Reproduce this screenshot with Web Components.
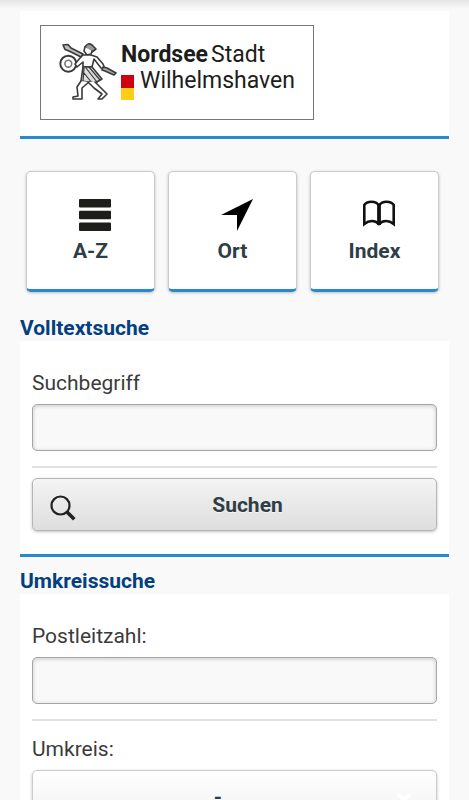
<!DOCTYPE html>
<html lang="de">
<head>
<meta charset="utf-8">
<meta name="viewport" content="width=device-width, initial-scale=1">
<title>Wilhelmshaven</title>
<style>
  body {
    --page: #f9f9f9;
    --blue: #258ad2;
    --heading: #04407f;
    --ink: #2f3e46;
    margin: 0;
    background: linear-gradient(#e6e6e6, #f9f9f9 9px) no-repeat var(--page);
    color: #3b3b3b;
    font-family: Roboto, "Liberation Sans", sans-serif;
    font-size: 21px;
    line-height: 26px;
  }
</style>
</head>
<body>

<mobile-page>
  <city-header></city-header>
  <tile-nav>
    <nav-tile label="A-Z" href="#a-z">
      <svg viewBox="0 0 32 32" width="32" height="32" fill="#1d1d1b">
        <rect y="0" width="32" height="8.6" rx="1"/>
        <rect y="11.7" width="32" height="8.6" rx="1"/>
        <rect y="23.4" width="32" height="8.6" rx="1"/>
      </svg>
    </nav-tile>
    <nav-tile label="Ort" href="#ort">
      <svg viewBox="0 0 32 32" width="32" height="32"><path d="M32 0 L16 32 V16 H0 Z"/></svg>
    </nav-tile>
    <nav-tile label="Index" href="#index">
      <svg viewBox="0 0 32 32" width="32" height="32" fill="none" stroke="#111" stroke-width="2.6">
        <path d="M16 6.5 C14 3.5 11 2.8 8.5 2.8 C5 2.8 2.5 4 1.3 6 V25 C6 21 12 21 16 25 C20 21 26 21 30.7 25 V6 C29.5 4 27 2.8 23.5 2.8 C21 2.8 18 3.5 16 6.5 Z"/>
        <path d="M16 5 V26" stroke-width="3.8"/>
      </svg>
    </nav-tile>
  </tile-nav>

  <form-panel heading="Volltextsuche">
    <text-field label="Suchbegriff" name="suchbegriff"></text-field>
    <search-button>Suchen</search-button>
  </form-panel>

  <form-panel heading="Umkreissuche">
    <text-field label="Postleitzahl:" name="plz"></text-field>
    <select-field label="Umkreis:" name="umkreis"></select-field>
  </form-panel>
</mobile-page>

<script>
// Every element attaches an open shadow root and renders once
class BaseElement extends HTMLElement {
  constructor() {
    super();
    this.attachShadow({ mode: "open" });
  }

  connectedCallback() {
    this.shadowRoot.innerHTML = this.render();
  }
}

class MobilePage extends BaseElement {
  render() {
    return `
      <style>
        :host { display: block; padding: 11px 20px 20px; }
      </style>
      <slot></slot>
    `;
  }
}

class CityHeader extends BaseElement {
  render() {
    return `
      <style>
        :host {
          display: flex;
          padding: 14px 20px 16px;
          background: #fff;
          border-bottom: 3px solid var(--blue);
        }
        .logo {
          display: flex;
          align-items: flex-start;
          box-sizing: border-box;
          width: 274px;
          height: 95px;
          padding: 16px 0 0 18px;
          border: 1px solid #777;
          color: #1d1d1b;
          font-size: 23px;
          line-height: 26px;
          text-decoration: none;
          white-space: nowrap;
        }
        .figure { flex: none; }
        .name { margin-left: 4px; }
        .row { display: flex; gap: 3px; }
        .flag {
          width: 13px;
          height: 25px;
          margin: 7px 3px 0 0;
          background: linear-gradient(#d0000f 50%, #fbcf16 50%);
        }
      </style>
      <a class="logo" href="#start">
        <svg class="figure" viewBox="0 0 58 60" width="58" height="60" fill="none" stroke="#3a3a3a" stroke-width="1.6" stroke-linejoin="round" stroke-linecap="round">
          <path d="M4 3 L9 2.5 L12 6 L24 12 L22 15 L10 9 L6 7.5 Z" fill="#bbb"/>
          <circle cx="9.3" cy="21.7" r="8" fill="#fff" stroke-width="2"/>
          <circle cx="9.3" cy="21.7" r="3.4" stroke="#777"/>
          <path d="M26 5 Q29 0 33 3 L37 7 L33 10 L29 8 Z" fill="#999"/>
          <path d="M26 5 L25 9 L28 13 L32 12 L33 9" fill="#fff"/>
          <path d="M24 13 L21 16 L16 22 L18 25 L24 20 V25 H33 L35 17 L42 26 L46 27 L44 22 L38 15 L32 13 Z" fill="#fff"/>
          <path d="M44 25 L48 26 L57 31 L55 33 L46 29 L43 28 Z" fill="#aaa"/>
          <path d="M24 25 H33 L43 37 L36 41 L22 39 Z" fill="#ddd"/>
          <path d="M25 26 L24 39 M27 26 L38 40 M30 25 L41 38 M25 31 L33 41" stroke-width="1.2"/>
          <path d="M22 39 L18 45 L19 54 L14 55 L14 57 H23 V46 L30 40" fill="#fff"/>
          <path d="M29 40 L35 46 L43 52 L39 57 H43 L48 52 L40 44 L36 40" fill="#fff"/>
        </svg>
        <span class="name">
          <span class="row"><b>Nordsee</b><span>Stadt</span></span>
          <span class="row"><span class="flag"></span><span>Wilhelmshaven</span></span>
        </span>
      </a>
    `;
  }
}

class TileNav extends BaseElement {
  render() {
    return `
      <style>
        :host { display: block; }
        nav {
          display: grid;
          grid-template-columns: repeat(3, 1fr);
          gap: 13px;
          padding: 32px 10px 24px 6px;
        }
      </style>
      <nav><slot></slot></nav>
    `;
  }
}

class NavTile extends BaseElement {
  render() {
    return `
      <style>
        :host { display: block; }
        a {
          display: flex;
          flex-direction: column;
          align-items: center;
          gap: 7px;
          padding: 27px 0 25px;
          border: 1px solid #ccc;
          border-bottom: 3px solid var(--blue);
          border-radius: 5px;
          background: #fff;
          box-shadow: 0 1px 3px rgba(0, 0, 0, 0.25);
          color: var(--ink);
          font-weight: 700;
          text-decoration: none;
        }
        ::slotted(svg) { display: block; margin-left: 8px; }
      </style>
      <a href="${this.getAttribute("href")}"><slot></slot>${this.getAttribute("label")}</a>
    `;
  }
}

class FormPanel extends BaseElement {
  render() {
    return `
      <style>
        :host { display: block; }
        h2 {
          margin: 0;
          color: var(--heading);
          font-size: inherit;
          font-weight: 700;
          line-height: 25px;
        }
        form {
          padding: 29px 12px 23px;
          border-bottom: 3px solid var(--blue);
          background: #fff;
          margin-bottom: 12px;
        }
      </style>
      <h2>${this.getAttribute("heading")}</h2>
      <form><slot></slot></form>
    `;
  }
}

class TextField extends BaseElement {
  render() {
    const name = this.getAttribute("name");
    return `
      <style>
        :host {
          display: block;
          padding-bottom: 15px;
          border-bottom: 2px solid #e2e2e2;
          margin-bottom: 10px;
        }
        label { display: block; margin-bottom: 8px; }
        input {
          display: block;
          box-sizing: border-box;
          width: 100%;
          height: 47px;
          padding: 0 10px;
          border: 1px solid #a5a5a5;
          border-radius: 5px;
          background: var(--page);
          box-shadow: inset 0 1px 4px rgba(0, 0, 0, 0.2);
          color: inherit;
          font: inherit;
        }
      </style>
      <label for="${name}">${this.getAttribute("label")}</label>
      <input type="text" id="${name}" name="${name}">
    `;
  }
}

class SearchButton extends BaseElement {
  render() {
    return `
      <style>
        :host { display: block; }
        button {
          display: grid;
          grid-template-columns: 26px 1fr;
          align-items: center;
          width: 100%;
          height: 53px;
          padding: 0 17px;
          border: 1px solid #b5b5b5;
          border-radius: 5px;
          background: linear-gradient(#f4f4f4, #dedede);
          box-shadow: 0 1px 3px rgba(0, 0, 0, 0.25);
          color: var(--ink);
          font: inherit;
          font-weight: 700;
          text-shadow: 0 1px 0 #f3f3f3;
        }
        svg { margin-top: 7px; }
      </style>
      <button type="submit">
        <svg viewBox="0 0 26 26" width="26" height="26" fill="none" stroke="#222">
          <circle cx="10.5" cy="10.5" r="9" stroke-width="2.2"/>
          <path d="M17 17 L24.3 24.3" stroke-width="3.6"/>
        </svg>
        <span><slot></slot></span>
      </button>
    `;
  }
}

class SelectField extends BaseElement {
  render() {
    const name = this.getAttribute("name");
    return `
      <style>
        :host { display: block; padding-top: 5px; }
        label { display: block; margin-bottom: 8px; }
        .box { display: grid; align-items: center; }
        select, svg { grid-area: 1 / 1; }
        select {
          appearance: none;
          width: 100%;
          height: 53px;
          padding: 0 33px 0 0;
          border: 1px solid #ccc;
          border-radius: 5px;
          background: linear-gradient(#fff, #f1f1f1);
          box-shadow: 0 1px 3px rgba(0, 0, 0, 0.25);
          color: var(--ink);
          font: inherit;
          font-weight: 700;
          text-align-last: center;
        }
        svg { justify-self: end; margin-right: 24px; pointer-events: none; }
      </style>
      <label for="${name}">${this.getAttribute("label")}</label>
      <div class="box">
        <select id="${name}" name="${name}">
          <option>-</option>
          <option>5 km</option>
          <option>10 km</option>
          <option>25 km</option>
        </select>
        <svg viewBox="0 0 18 12" width="18" height="12" fill="none" stroke="#fff" stroke-width="4"><path d="M3 3 L9 9 L15 3"/></svg>
      </div>
    `;
  }
}

customElements.define("mobile-page", MobilePage);
customElements.define("city-header", CityHeader);
customElements.define("tile-nav", TileNav);
customElements.define("nav-tile", NavTile);
customElements.define("form-panel", FormPanel);
customElements.define("text-field", TextField);
customElements.define("search-button", SearchButton);
customElements.define("select-field", SelectField);
</script>
</body>
</html>
